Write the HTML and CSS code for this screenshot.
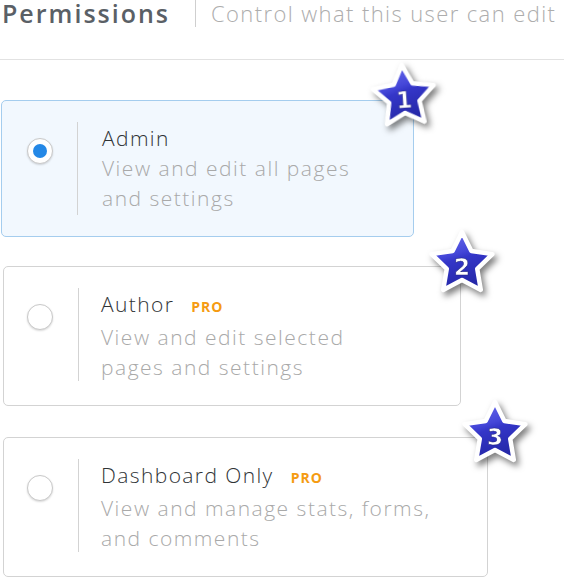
FILE: index.html
```html
<!DOCTYPE html>
<html>
<head>
<meta charset="utf-8">
<link rel="stylesheet" href="styles.css">
</head>
<body>
<div class="page">
  <header class="head">
    <h1 class="head-title">Permissions</h1>
    <span class="head-sep"></span>
    <p class="head-sub">Control what this user can edit</p>
  </header>

  <div class="list">
    <div class="card card-active card-1">
      <div class="radio-col"><span class="radio radio-on"></span></div>
      <div class="body">
        <div class="title">Admin</div>
        <div class="desc">View and edit all pages<br>and settings</div>
      </div>
    </div>

    <div class="card card-2">
      <div class="radio-col"><span class="radio"></span></div>
      <div class="body">
        <div class="title">Author <span class="pro">PRO</span></div>
        <div class="desc">View and edit selected<br>pages and settings</div>
      </div>
    </div>

    <div class="card card-3">
      <div class="radio-col"><span class="radio"></span></div>
      <div class="body">
        <div class="title">Dashboard Only <span class="pro">PRO</span></div>
        <div class="desc">View and manage stats, forms,<br>and comments</div>
      </div>
    </div>
  </div>

  <svg class="star star-1" width="90" height="90" viewBox="0 0 90 90">
    <defs>
      <linearGradient id="sg" x1="0" y1="0" x2="0.3" y2="1">
        <stop offset="0" stop-color="#7375f2"/>
        <stop offset="0.45" stop-color="#4446d8"/>
        <stop offset="0.55" stop-color="#3436c8"/>
        <stop offset="1" stop-color="#2528a8"/>
      </linearGradient>
    </defs>
    <polygon points="45,13 54.4,32.06 75.44,35.11 60.22,49.94 63.81,70.89 45,61 26.19,70.89 29.78,49.94 14.56,35.11 35.6,32.06" fill="url(#sg)" stroke="#ffffff" stroke-width="4.5" stroke-linejoin="round"/>
    <text x="45" y="56" text-anchor="middle" class="star-num">1</text>
  </svg>
  <svg class="star star-2" width="90" height="90" viewBox="0 0 90 90">
    <polygon points="45,13 54.4,32.06 75.44,35.11 60.22,49.94 63.81,70.89 45,61 26.19,70.89 29.78,49.94 14.56,35.11 35.6,32.06" fill="url(#sg)" stroke="#ffffff" stroke-width="4.5" stroke-linejoin="round"/>
    <text x="45" y="56" text-anchor="middle" class="star-num">2</text>
  </svg>
  <svg class="star star-3" width="90" height="90" viewBox="0 0 90 90">
    <polygon points="45,13 54.4,32.06 75.44,35.11 60.22,49.94 63.81,70.89 45,61 26.19,70.89 29.78,49.94 14.56,35.11 35.6,32.06" fill="url(#sg)" stroke="#ffffff" stroke-width="4.5" stroke-linejoin="round"/>
    <text x="45" y="56" text-anchor="middle" class="star-num">3</text>
  </svg>
</div>
</body>
</html>
```

FILE: styles.css
```css
html, body {
  margin: 0;
  padding: 0;
  background: #ffffff;
}

body {
  font-family: "Open Sans", "Noto Sans", sans-serif;
  width: 564px;
  height: 577px;
  overflow: hidden;
}

.page {
  position: relative;
  width: 564px;
  height: 577px;
}

.head {
  display: flex;
  align-items: flex-start;
  height: 60px;
  border-bottom: 1px solid #e2e2e2;
  box-sizing: border-box;
}

.head-title {
  margin: 0 0 0 2px;
  font-size: 25px;
  font-weight: 600;
  color: #5a6066;
  line-height: 27px;
  letter-spacing: 2px;
}

.head-sep {
  width: 1px;
  height: 27px;
  background: #cfcfcf;
  margin-left: 25px;
}

.head-sub {
  margin: 0 0 0 15px;
  font-size: 22px;
  font-weight: 300;
  color: #adadad;
  line-height: 27px;
  letter-spacing: 1.4px;
  white-space: nowrap;
}

.list {
  display: flex;
  flex-direction: column;
  padding-top: 40px;
}

.card {
  display: flex;
  align-items: flex-start;
  box-sizing: border-box;
  border: 1px solid #d3d3d3;
  border-radius: 5px;
  padding: 21px 0 22px 0;
  background: #ffffff;
}

.card-active {
  border-color: #a5cdee;
  background: #f2f8fe;
}

.card-1 {
  width: 413px;
  height: 137px;
  margin-left: 1px;
}

.card-2 {
  width: 458px;
  height: 140px;
  margin-left: 3px;
  margin-top: 29px;
}

.card-3 {
  width: 485px;
  height: 140px;
  margin-left: 3px;
  margin-top: 31px;
}

.radio-col {
  width: 75px;
  flex: none;
  display: flex;
  justify-content: flex-start;
  padding-left: 25px;
  padding-top: 16px;
  box-sizing: border-box;
}

.card-2 .radio-col,
.card-3 .radio-col {
  width: 74px;
  padding-left: 23px;
}

.radio {
  display: block;
  width: 26px;
  height: 26px;
  box-sizing: border-box;
  border-radius: 50%;
  border: 1px solid #c9c9c9;
  background: #ffffff;
  box-shadow: 0 1px 2px rgba(0, 0, 0, 0.15);
  position: relative;
}

.radio-on::after {
  content: "";
  position: absolute;
  left: 5px;
  top: 5px;
  width: 14px;
  height: 14px;
  border-radius: 50%;
  background: #2488e6;
}

.body {
  border-left: 1px solid #d3d3d3;
  padding-left: 24px;
  padding-top: 1px;
  height: 92px;
  white-space: nowrap;
}

.card-2 .body,
.card-3 .body {
  padding-left: 22px;
}

.title {
  font-size: 21px;
  font-weight: 300;
  line-height: 30px;
  color: #2f3336;
  letter-spacing: 1.4px;
  display: flex;
  align-items: baseline;
}

.pro {
  font-size: 14px;
  font-weight: 700;
  color: #f59b12;
  letter-spacing: 1px;
  margin-left: 17px;
}

.desc {
  font-size: 21px;
  font-weight: 300;
  line-height: 30px;
  color: #a9a9a9;
  letter-spacing: 1.5px;
}

.star {
  position: absolute;
  filter: drop-shadow(3px 4px 3px rgba(0, 0, 0, 0.5));
}

.star-num {
  font-family: "DejaVu Sans", "Liberation Sans", sans-serif;
  font-weight: 700;
  font-size: 23px;
  fill: #ffffff;
  stroke: #1c1f7a;
  stroke-width: 0.5px;
}

.star-1 { left: 359px; top: 52px; transform: rotate(-4deg); }
.star-2 { left: 417px; top: 219px; }
.star-3 { left: 450px; top: 389px; }
```
